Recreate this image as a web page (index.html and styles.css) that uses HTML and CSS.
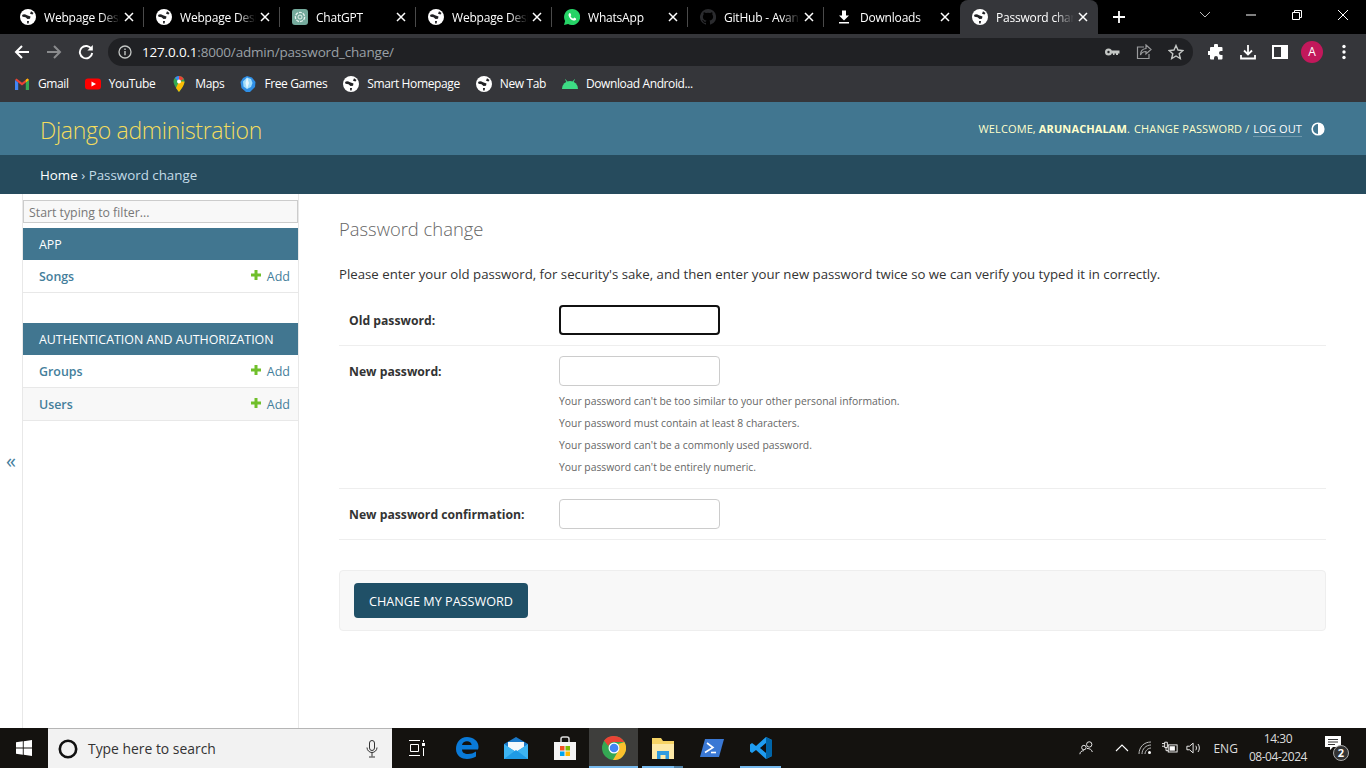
FILE: index.html
```html
<!DOCTYPE html>
<html lang="en">
<head>
    <meta charset="UTF-8">
    <meta name="viewport" content="width=device-width, initial-scale=1.0">
    <title>Password change | Django site admin</title>
    <link rel="stylesheet" href="styles.css">
</head>
<body>
    <svg class="sprites" width="0" height="0">
        <symbol id="globe" viewBox="0 0 16 16">
            <circle cx="8" cy="8" r="8" fill="#fff"/>
            <path d="M2 6C4 4.500 5.500 5.500 7 6.200L10.500 7.500 10 9.800 7.500 10 5.500 8.200 2.500 7.800ZM11 2.200 13.500 4 12.500 5.500 10 4.800ZM7 12 9 12 8.600 14.600 7.200 14.600Z" fill="#202124"/>
        </symbol>
        <symbol id="close" viewBox="0 0 10 10">
            <path d="M1 1 9 9M9 1 1 9" stroke="#fff" stroke-width="1.500" fill="none"/>
        </symbol>
        <symbol id="plus" viewBox="0 0 10 10">
            <path d="M5 0v10M0 5h10" stroke="#70bf2b" stroke-width="3"/>
        </symbol>
    </svg>

    <div class="chrome">
        <div class="tabstrip">
            <div class="tab sep"><svg class="favicon"><use href="#globe"/></svg><span class="tab-title">Webpage Design</span><svg class="tab-close"><use href="#close"/></svg></div>
            <div class="tab sep"><svg class="favicon"><use href="#globe"/></svg><span class="tab-title">Webpage Design</span><svg class="tab-close"><use href="#close"/></svg></div>
            <div class="tab sep">
                <svg class="favicon" viewBox="0 0 16 16"><rect width="16" height="16" rx="3" fill="#74aa9c"/><circle cx="8" cy="8" r="4.600" fill="none" stroke="#e6f2ef" stroke-width="1.300" stroke-dasharray="3 1"/><circle cx="8" cy="8" r="2" fill="none" stroke="#e6f2ef"/></svg>
                <span class="tab-title">ChatGPT</span><svg class="tab-close"><use href="#close"/></svg>
            </div>
            <div class="tab sep"><svg class="favicon"><use href="#globe"/></svg><span class="tab-title">Webpage Design</span><svg class="tab-close"><use href="#close"/></svg></div>
            <div class="tab sep">
                <svg class="favicon" viewBox="0 0 16 16"><path d="M8 0a8 8 0 0 0-6.900 12L0 16l4.100-1.100A8 8 0 1 0 8 0Z" fill="#25d366"/><path d="M5.600 4c-.9.500-1.300 1.600-.9 2.900.7 2.200 2.500 4 4.700 4.600 1.300.3 2.300-.2 2.700-1.100l-.1-.9-1.700-.9-.9.900C8.600 10 7 8.500 6.500 7.100l.8-.9-.7-1.800Z" fill="#fff"/></svg>
                <span class="tab-title">WhatsApp</span><svg class="tab-close"><use href="#close"/></svg>
            </div>
            <div class="tab sep">
                <svg class="favicon" viewBox="0 0 16 16"><path d="M8 0a8 8 0 0 0-2.500 15.600c.4.100.5-.2.500-.4v-1.400c-2.200.5-2.700-1-2.700-1-.4-.9-.9-1.200-.9-1.200-.7-.5.100-.5.100-.5.800.1 1.200.8 1.200.8.700 1.200 1.900.9 2.300.7.100-.5.300-.9.500-1.100-1.800-.2-3.600-.9-3.600-4 0-.9.300-1.600.8-2.100-.1-.2-.4-1 .1-2.100 0 0 .7-.2 2.200.8a7.600 7.600 0 0 1 4 0c1.500-1 2.200-.8 2.200-.8.400 1.100.2 1.900.1 2.100.5.600.8 1.300.8 2.100 0 3.100-1.900 3.800-3.700 4 .3.300.6.700.6 1.500v2.200c0 .2.100.5.600.4A8 8 0 0 0 8 0Z" fill="#2a2b2e"/></svg>
                <span class="tab-title">GitHub - Avantika</span><svg class="tab-close"><use href="#close"/></svg>
            </div>
            <div class="tab">
                <svg class="favicon" viewBox="0 0 16 16"><path d="M6 1.500h4v5h3L8 11.500 3 6.500h3ZM3 13h10v1.500H3Z" fill="#fff"/></svg>
                <span class="tab-title">Downloads</span><svg class="tab-close"><use href="#close"/></svg>
            </div>
            <div class="tab tab-active"><svg class="favicon"><use href="#globe"/></svg><span class="tab-title">Password change</span><svg class="tab-close"><use href="#close"/></svg></div>
            <svg class="new-tab" viewBox="0 0 14 14"><path d="M7 1v12M1 7h12" stroke="#fff" stroke-width="1.800"/></svg>
            <div class="window-controls">
                <svg class="win-btn" viewBox="0 0 46 16"><path d="M18 5l5 5 5-5" stroke="#bbb" fill="none"/></svg>
                <svg class="win-btn" viewBox="0 0 46 16"><path d="M18 8h10" stroke="#fff"/></svg>
                <svg class="win-btn" viewBox="0 0 46 16"><path d="M18.500 5.500h7v7h-7ZM20.500 5.500v-2h7v7h-2" stroke="#fff" fill="none"/></svg>
                <svg class="win-btn" viewBox="0 0 46 16"><path d="M18 3l10 10M28 3 18 13" stroke="#fff" fill="none"/></svg>
            </div>
        </div>

        <div class="toolbar">
            <svg class="nav-icon" viewBox="0 0 16 16"><path d="M15 8H2M8 2 2 8l6 6" stroke="#fff" stroke-width="2" fill="none"/></svg>
            <svg class="nav-icon" viewBox="0 0 16 16"><path d="M1 8h13M8 2l6 6-6 6" stroke="#8a8b8d" stroke-width="2" fill="none"/></svg>
            <svg class="nav-icon" viewBox="0 0 16 16"><path d="M13.500 5.200A6.200 6.200 0 1 0 14.200 9" stroke="#fff" stroke-width="1.900" fill="none"/><path d="M14.800 1v5.400H9.400Z" fill="#fff"/></svg>
            <div class="omnibox">
                <svg class="omni-info" viewBox="0 0 14 14"><circle cx="7" cy="7" r="6" stroke="#c4c7c5" stroke-width="1.300" fill="none"/><path d="M7 6v4.200M7 3.400v1.500" stroke="#c4c7c5" stroke-width="1.400"/></svg>
                <span class="url"><span class="url-host">127.0.0.1</span>:8000/admin/password_change/</span>
                <svg class="omni-action" viewBox="0 0 16 16"><circle cx="4.500" cy="8" r="3.500" fill="#c4c7c5"/><circle cx="4.500" cy="8" r="1.200" fill="#202124"/><path d="M7.500 6.500H15.500V9.500H14V11H12V9.500H10.500V11H9V9.500H7.500Z" fill="#c4c7c5"/></svg>
                <svg class="omni-action" viewBox="0 0 16 16"><path d="M8 3H1.500v11.500H13V10" stroke="#9a9b9d" stroke-width="1.200" fill="none"/><path d="M10 1l5 4.500-5 4.500V7.500C7.500 7.500 5.500 8.500 4.500 11c0-3.500 2-6.200 5.500-6.500Z" stroke="#9a9b9d" stroke-width="1.200" fill="none"/></svg>
                <svg class="omni-action" viewBox="0 0 16 16"><path d="M8 1.500l2 4.500 4.900.5-3.700 3.200 1.100 4.800L8 12l-4.300 2.500 1.100-4.800L1.100 6.500 6 6Z" stroke="#c4c7c5" stroke-width="1.400" fill="none"/></svg>
            </div>
            <svg class="tool-icon puzzle" viewBox="0 0 16 16"><path d="M6 1.500a2 2 0 0 1 4 0V3h3.500a1 1 0 0 1 1 1v3H13a2 2 0 0 0 0 4h1.500v3.500a1 1 0 0 1-1 1h-3.500V14a2 2 0 0 0-4 0v1.500H3a1 1 0 0 1-1-1V11H.500a2 2 0 0 1 0-4H2V4a1 1 0 0 1 1-1h3Z" fill="#fff"/></svg>
            <svg class="tool-icon" viewBox="0 0 16 16"><path d="M8 1v9M4 6.500l4 4 4-4M1 11v3.500h14V11" stroke="#fff" stroke-width="1.800" fill="none"/></svg>
            <svg class="tool-icon" viewBox="0 0 16 16"><path d="M1 2h14v12H1Z" stroke="#fff" stroke-width="2" fill="none"/><path d="M9 2h6v12H9Z" fill="#fff"/></svg>
            <div class="avatar">A</div>
            <svg class="tool-icon kebab" viewBox="0 0 16 16"><circle cx="8" cy="2.500" r="1.700" fill="#fff"/><circle cx="8" cy="8" r="1.700" fill="#fff"/><circle cx="8" cy="13.500" r="1.700" fill="#fff"/></svg>
        </div>

        <div class="bookmarks">
            <a class="bookmark"><svg class="bm-icon" viewBox="0 0 16 16"><path d="M1 4 8 9.500 15 4 13.500 2.500 8 6.800 2.500 2.500Z" fill="#ea4335"/><path d="M1 4V14H4.200V6.500Z" fill="#4285f4"/><path d="M15 4V14H11.800V6.500Z" fill="#34a853"/><path d="M15 4 13.500 2.500 11.800 3.800 11.800 6.500Z" fill="#fbbc04"/></svg>Gmail</a>
            <a class="bookmark"><svg class="bm-icon" viewBox="0 0 16 16"><rect y="2.500" width="16" height="11" rx="3" fill="#f00"/><path d="M6.500 5.500 11 8l-4.500 2.500Z" fill="#fff"/></svg>YouTube</a>
            <a class="bookmark"><svg class="bm-icon" viewBox="0 0 16 16"><path d="M8 0a5.500 5.500 0 0 0-5.500 5.500C2.500 9.500 8 16 8 16s5.500-6.500 5.500-10.500A5.500 5.500 0 0 0 8 0Z" fill="#34a853"/><path d="M8 0a5.500 5.500 0 0 0-4.200 2L8 5.500Z" fill="#4285f4"/><path d="M8 0v5.500l4.800-2.600A5.500 5.500 0 0 0 8 0Z" fill="#ea4335"/><path d="M13.500 5.500 8 5.500 5 12l3 4c1-1.500 5.500-6.500 5.500-10.500Z" fill="#fbbc04"/><circle cx="8" cy="5.500" r="2" fill="#fff"/></svg>Maps</a>
            <a class="bookmark"><svg class="bm-icon" viewBox="0 0 16 16"><path d="M7 0 12 1.500 15.500 6 15 11 10 16H6L1.500 12 .5 6 3 2Z" fill="#2f8fe6"/><path d="M7 1.500 11 3 12.500 7 11 11 7 13 3.500 10.500 3 5.500Z" fill="#9fdcfb"/><path d="M7 1.500 9 7 7 13 5.500 7Z" fill="#e4f6ff"/></svg>Free Games</a>
            <a class="bookmark"><svg class="bm-icon"><use href="#globe"/></svg>Smart Homepage</a>
            <a class="bookmark"><svg class="bm-icon"><use href="#globe"/></svg>New Tab</a>
            <a class="bookmark"><svg class="bm-icon" viewBox="0 0 16 16"><path d="M0 13a8 8 0 0 1 16 0Z" fill="#3ddc84"/><path d="M3.500 3.500 5 6M12.500 3.500 11 6" stroke="#3ddc84"/></svg>Download Android...</a>
        </div>
    </div>

    <div class="header">
        <div class="branding">Django administration</div>
        <div class="user-tools">
            <span>Welcome, <strong>Arunachalam</strong>.</span>
            <span>Change password /</span>
            <a class="logout">Log out</a>
            <svg class="theme-toggle" viewBox="0 0 14 14"><circle cx="7" cy="7" r="5.800" stroke="#fff" stroke-width="1.600" fill="none"/><path d="M7 1.200a5.800 5.800 0 0 1 0 11.600Z" fill="#fff"/></svg>
        </div>
    </div>
    <div class="breadcrumbs"><a class="crumb-home">Home</a> › Password change</div>

    <div class="main">
        <button class="sidebar-toggle">«</button>
        <nav class="sidebar">
            <input class="nav-filter" type="text" placeholder="Start typing to filter...">
            <div class="app-module">
                <div class="caption">App</div>
                <div class="model-row"><a class="model-name">Songs</a><a class="addlink"><svg class="plus"><use href="#plus"/></svg>Add</a></div>
            </div>
            <div class="app-module">
                <div class="caption">Authentication and Authorization</div>
                <div class="model-row"><a class="model-name">Groups</a><a class="addlink"><svg class="plus"><use href="#plus"/></svg>Add</a></div>
                <div class="model-row alt"><a class="model-name">Users</a><a class="addlink"><svg class="plus"><use href="#plus"/></svg>Add</a></div>
            </div>
        </nav>

        <div class="content">
            <h1>Password change</h1>
            <p class="intro">Please enter your old password, for security's sake, and then enter your new password twice so we can verify you typed it in correctly.</p>
            <form>
                <div class="form-row">
                    <label>Old password:</label>
                    <div class="field"><input class="pw pw-focus" type="password"></div>
                </div>
                <div class="form-row">
                    <label>New password:</label>
                    <div class="field">
                        <input class="pw" type="password">
                        <ul class="help">
                            <li>Your password can't be too similar to your other personal information.</li>
                            <li>Your password must contain at least 8 characters.</li>
                            <li>Your password can't be a commonly used password.</li>
                            <li>Your password can't be entirely numeric.</li>
                        </ul>
                    </div>
                </div>
                <div class="form-row">
                    <label>New password confirmation:</label>
                    <div class="field"><input class="pw" type="password"></div>
                </div>
                <div class="submit-row"><button class="default" type="button">Change my password</button></div>
            </form>
        </div>
    </div>

    <div class="taskbar">
        <div class="start"><svg class="win-logo" viewBox="0 0 16 16"><path d="M0 2.300 6.800 1.300V7.600H0ZM7.700 1.200 16 0V7.600H7.700ZM0 8.400H6.800V14.700L0 13.700ZM7.700 8.400H16V16L7.700 14.800Z" fill="#fff"/></svg></div>
        <div class="search">
            <svg class="cortana" viewBox="0 0 20 20"><circle cx="10" cy="10" r="8.200" stroke="#111" stroke-width="2.600" fill="none"/></svg>
            <span class="search-text">Type here to search</span>
            <svg class="mic" viewBox="0 0 12 18"><rect x="3.500" y=".5" width="5" height="10" rx="2.500" stroke="#333" fill="none"/><path d="M1 7.500a5 5 0 0 0 10 0M6 12.500v4M3 17h6" stroke="#333" fill="none"/></svg>
        </div>
        <div class="task-icon task-view"><svg class="tb-svg" viewBox="0 0 16 16"><path d="M0 .5h11M0 15.500h11M1.500 4.500h8v7h-8Z" stroke="#fff" fill="none"/><path d="M13 3h3v3h-3ZM14 8h1v8h-1ZM14 0h1v2h-1Z" fill="#fff"/></svg></div>
        <div class="task-icon"><svg class="tb-app" viewBox="0 0 24 24"><path d="M12 1C5 1 1 7 1 13c0 7 6 10 11 10 3.500 0 6.500-1 9-2.500v-5c-2.500 1.700-5 2.500-8 2.500-3.500 0-6-1.500-6-4.500h16c.5-1 .5-2 .5-3C23.500 5 18 1 12 1Zm-5 8c.3-2.200 2.500-3.800 5-3.800s4.500 1.500 4.700 3.800Z" fill="#0a7ad8"/></svg></div>
        <div class="task-icon"><svg class="tb-app" viewBox="0 0 24 24"><path d="M0 8 12 1l12 7v15H0Z" fill="#1a78c8"/><path d="M4 6h16v5l-8 5-8-5Z" fill="#f4f8fb"/><path d="M0 8l12 8 12-8v15H0Z" fill="#3db4f2"/><path d="M0 23 12 14l12 9Z" fill="#1f9be6"/></svg></div>
        <div class="task-icon"><svg class="tb-app" viewBox="0 0 24 24"><path d="M8 7V3a2 2 0 0 1 2-2h4a2 2 0 0 1 2 2v4" stroke="#ddd" stroke-width="1.500" fill="none"/><rect x="1" y="6" width="22" height="18" fill="#f4f4f4"/><rect x="7" y="10" width="4.500" height="4.500" fill="#f25022"/><rect x="12.500" y="10" width="4.500" height="4.500" fill="#7fba00"/><rect x="7" y="15.500" width="4.500" height="4.500" fill="#00a4ef"/><rect x="12.500" y="15.500" width="4.500" height="4.500" fill="#ffb900"/></svg></div>
        <div class="task-icon task-active running"><svg class="tb-app" viewBox="0 0 24 24"><circle cx="12" cy="12" r="12" fill="#34a853"/><path d="M12 0a12 12 0 0 1 10.400 6H12a6 6 0 0 0-5.700 4L2 4.500A12 12 0 0 1 12 0Z" fill="#ea4335"/><path d="M22.400 6A12 12 0 0 1 11 24l5.200-9A6 6 0 0 0 16 8Z" fill="#fbc02d"/><circle cx="12" cy="12" r="5.500" fill="#fff"/><circle cx="12" cy="12" r="4.300" fill="#4285f4"/></svg></div>
        <div class="task-icon running stacked"><svg class="tb-app" viewBox="0 0 24 24"><path d="M1 2h9l2 3h11v18H1Z" fill="#f6d365"/><path d="M1 8h22v15H1Z" fill="#fde9a8"/><path d="M6 23v-8h12v8h-3.500v-4h-5v4Z" fill="#2f9be0"/></svg></div>
        <div class="task-icon"><svg class="tb-app" viewBox="0 0 24 24"><path d="M5 3h19l-5 18H0Z" fill="#3a78d4"/><path d="M7 7l6 4.500-8 5" stroke="#fff" stroke-width="1.600" fill="none"/><path d="M11 16.500h5" stroke="#fff" stroke-width="1.600"/></svg></div>
        <div class="task-icon running"><svg class="tb-app" viewBox="0 0 24 24"><path d="M17 1l6 3v16l-6 3L7 14l-4 3-2-1.500V8.500L3 7l4 3Z" fill="#1f9cf0"/><path d="M17 7 11 12l6 5Z" fill="#101010"/><path d="M17 1l6 3v16l-6 3Z" fill="#0065a9"/></svg></div>
        <div class="tray">
            <svg class="tray-people" viewBox="0 0 18 18"><circle cx="11.500" cy="5" r="3" stroke="#fff" fill="none"/><circle cx="5.500" cy="8.500" r="2.500" stroke="#fff" fill="none"/><path d="M1 16c0-2.500 2-4 4.500-4M9 9.500c3 0 5.500 1.500 6 4" stroke="#fff" fill="none"/></svg>
            <svg class="tray-chevron" viewBox="0 0 14 8"><path d="M1 7l6-6 6 6" stroke="#fff" stroke-width="1.100" fill="none"/></svg>
            <svg class="tray-icon" viewBox="0 0 16 16"><path d="M1 14C1 7 6 2 13 2M4 14c0-5 4-9 9-9M7 14c0-3 3-6 6-6" stroke="#bbb" fill="none"/><circle cx="11.500" cy="12.500" r="1.500" fill="#fff"/></svg>
            <svg class="tray-icon" viewBox="0 0 18 16"><path d="M0 3h3M0 6h3M3 1.500h3v6H3ZM4.500 7.500V11H7" stroke="#fff" fill="none"/><rect x="7" y="4.500" width="10" height="8" stroke="#fff" fill="none"/><rect x="8.500" y="6" width="6" height="5" fill="#fff"/></svg>
            <svg class="tray-icon" viewBox="0 0 18 16"><path d="M1 6h3l4-3.500v11L4 10H1Z M11 5.500c1 1.500 1 3.500 0 5M13.500 3.500c2 2.500 2 6.500 0 9" stroke="#fff" fill="none"/></svg>
            <span class="lang">ENG</span>
            <div class="clock"><span>14:30</span><span>08-04-2024</span></div>
            <div class="notif">
                <svg class="notif-icon" viewBox="0 0 16 16"><path d="M0 0h16v11H8l-3 3v-3H0Z" fill="#fff"/><path d="M3 3.500h10M3 6h10M3 8.500h7" stroke="#333"/></svg>
                <span class="notif-badge">2</span>
            </div>
        </div>
    </div>
</body>
</html>
```

FILE: styles.css
```css
:root {
    --primary: #417690;
    --secondary: #264b5d;
    --link: #447e9b;
    --hairline: #e8e8e8;
    --chrome-bar: #35363a;
    --ui-font: "Open Sans", "Noto Sans", Arial, sans-serif;
}

* {
    box-sizing: border-box;
}

html, body {
    height: 100%;
}

body {
    margin: 0;
    display: flex;
    flex-direction: column;
    height: 100vh;
    overflow: hidden;
    background: #fff;
    color: #333;
    font-family: var(--ui-font);
    font-size: 14px;
}

.sprites {
    position: absolute;
}

/* browser chrome */
.tabstrip {
    display: flex;
    align-items: center;
    height: 34px;
    padding-left: 8px;
    background: #000;
    color: #fff;
    font-size: 12px;
    letter-spacing: -0.2px;
}

.tab {
    display: flex;
    align-items: center;
    flex: none;
    width: 136px;
    height: 34px;
    padding: 0 10px 0 12px;
    position: relative;
}

.tab.sep::after {
    content: "";
    position: absolute;
    right: 0;
    top: 7px;
    width: 1px;
    height: 20px;
    background: #4a4a4a;
}

.tab-active {
    width: 138px;
    background: var(--chrome-bar);
    border-radius: 8px 8px 0 0;
}

.favicon {
    flex: none;
    width: 16px;
    height: 16px;
}

.tab-title {
    flex: 1;
    min-width: 0;
    margin-left: 8px;
    overflow: hidden;
    white-space: nowrap;
    -webkit-mask-image: linear-gradient(to right, #000 75%, transparent);
    mask-image: linear-gradient(to right, #000 75%, transparent);
}

.tab-close {
    flex: none;
    width: 10px;
    height: 10px;
    margin-left: 4px;
}

.new-tab {
    flex: none;
    width: 14px;
    height: 14px;
    margin-left: 14px;
}

.window-controls {
    display: flex;
    margin-left: auto;
    margin-bottom: 4px;
}

.win-btn {
    width: 46px;
    height: 16px;
}

.toolbar {
    display: flex;
    align-items: center;
    height: 35px;
    padding-left: 14px;
    background: var(--chrome-bar);
}

.nav-icon {
    flex: none;
    width: 16px;
    height: 16px;
    margin-right: 16px;
}

.omnibox {
    display: flex;
    align-items: center;
    flex: none;
    width: 1085px;
    height: 28px;
    margin-left: -2px;
    padding: 0 9px 0 10px;
    border-radius: 14px;
    background: #202124;
    color: #9aa0a6;
    font-size: 13.5px;
}

.omni-info {
    flex: none;
    width: 14px;
    height: 14px;
}

.url {
    flex: 1;
    margin-left: 10px;
    letter-spacing: -0.18px;
}

.url-host {
    color: #fff;
}

.omni-action {
    flex: none;
    width: 16px;
    height: 16px;
    margin-left: 16px;
}

.tool-icon {
    flex: none;
    width: 16px;
    height: 16px;
    margin-left: 16px;
}

.tool-icon.puzzle {
    margin-left: 15px;
}

.tool-icon.kebab {
    margin-left: 13px;
}

.avatar {
    flex: none;
    width: 22px;
    height: 22px;
    margin-left: 13px;
    border-radius: 50%;
    background: #c2185b;
    color: #fff;
    font-size: 12px;
    line-height: 22px;
    text-align: center;
}

.bookmarks {
    display: flex;
    align-items: center;
    height: 33px;
    padding: 0 0 4px 14px;
    background: var(--chrome-bar);
    color: #fff;
    font-size: 12px;
    letter-spacing: -0.38px;
}

.bookmark {
    display: flex;
    align-items: center;
    margin-right: 16px;
    white-space: nowrap;
}

.bm-icon {
    flex: none;
    width: 16px;
    height: 16px;
    margin-right: 8px;
}

/* admin header */
.header {
    display: flex;
    align-items: center;
    justify-content: space-between;
    height: 53px;
    padding: 0 40px;
    background: var(--primary);
    color: #ffc;
}

.branding {
    padding-top: 2px;
    color: #f5dd5d;
    font-size: 23px;
    font-weight: 300;
    letter-spacing: -0.3px;
}

.user-tools {
    display: flex;
    align-items: center;
    gap: 4px;
    margin-right: 1px;
    font-size: 11px;
    letter-spacing: 0.12px;
    text-transform: uppercase;
}

.logout {
    border-bottom: 1px solid rgba(255, 255, 255, 0.25);
    color: #fff;
}

.theme-toggle {
    width: 14px;
    height: 14px;
    margin-left: 5px;
}

.breadcrumbs {
    height: 39px;
    padding: 0 40px;
    background: var(--secondary);
    color: #c4dce8;
    font-size: 13.35px;
    line-height: 40px;
}

.crumb-home {
    color: #fff;
}

/* sidebar */
.main {
    display: flex;
    flex: 1;
    min-height: 0;
}

.sidebar-toggle {
    flex: none;
    width: 22px;
    padding: 0 0 2px;
    border: 0;
    background: #fff;
    color: #447e9b;
    font-family: var(--ui-font);
    font-size: 20px;
}

.sidebar {
    flex: none;
    width: 277px;
    padding-top: 6px;
    border-left: 1px solid var(--hairline);
    border-right: 1px solid var(--hairline);
}

.nav-filter {
    display: block;
    width: 100%;
    height: 23px;
    margin-bottom: 5px;
    padding: 2px 5px 0;
    border: 1px solid #ccc;
    background: #f8f8f8;
    font-family: var(--ui-font);
    font-size: 12.3px;
}

.nav-filter::placeholder {
    color: #777;
}

.app-module {
    margin-bottom: 30px;
}

.caption {
    height: 32px;
    padding-left: 16px;
    background: var(--primary);
    color: #fff;
    font-size: 12.4px;
    line-height: 33px;
    text-transform: uppercase;
}

.model-row {
    display: flex;
    align-items: center;
    justify-content: space-between;
    height: 33px;
    padding: 0 8px 0 16px;
    border-bottom: 1px solid var(--hairline);
    color: var(--link);
    font-size: 12.5px;
}

.model-row.alt {
    background: #f8f8f8;
}

.model-name {
    font-size: 12.4px;
    font-weight: 600;
}

.addlink {
    display: flex;
    align-items: center;
}

.plus {
    width: 10px;
    height: 10px;
    margin-right: 6px;
    margin-bottom: 3px;
}

/* form */
.content {
    flex: 1;
    min-width: 0;
    padding: 20px 40px 0;
}

h1 {
    margin: 0;
    color: #666;
    font-size: 18.4px;
    font-weight: 300;
    line-height: 30px;
}

.intro {
    margin: 20px 0 11px;
    font-size: 13.22px;
    line-height: 20px;
}

.form-row {
    display: flex;
    padding: 10px;
    border-bottom: 1px solid #eee;
}

.form-row label {
    flex: none;
    width: 210px;
    height: 30px;
    padding-top: 1px;
    color: #333;
    font-size: 12.2px;
    font-weight: 700;
    line-height: 30px;
}

.pw {
    display: block;
    width: 161px;
    height: 30px;
    border: 1px solid #ccc;
    border-radius: 4px;
    background: #fff;
}

.pw-focus {
    border: 2px solid #111;
    outline: 0;
}

.help {
    margin: 4px 0 0;
    padding: 0;
    list-style: none;
    color: #666;
    font-size: 10.37px;
    line-height: 22px;
}

.submit-row {
    height: 61px;
    margin-top: 30px;
    padding: 12px 14px;
    border: 1px solid #eee;
    border-radius: 4px;
    background: #f8f8f8;
}

.default {
    width: 174px;
    height: 35px;
    padding: 0;
    border: 0;
    border-radius: 4px;
    background: #205067;
    color: #fff;
    font-family: var(--ui-font);
    font-size: 12.65px;
    text-transform: uppercase;
}

/* taskbar */
.taskbar {
    display: flex;
    align-items: stretch;
    flex: none;
    height: 40px;
    background: #14120f;
    color: #fff;
}

.start {
    display: flex;
    align-items: center;
    justify-content: center;
    flex: none;
    width: 48px;
}

.win-logo {
    width: 16px;
    height: 16px;
}

.search {
    display: flex;
    align-items: center;
    flex: none;
    width: 344px;
    padding: 0 14px 0 10px;
    border-top: 1px solid #b5b5b5;
    background: #f2f2f2;
    color: #333;
    font-size: 13.9px;
}

.cortana {
    flex: none;
    width: 20px;
    height: 20px;
}

.search-text {
    flex: 1;
    margin-left: 10px;
}

.mic {
    flex: none;
    width: 12px;
    height: 18px;
}

.task-icon {
    display: flex;
    align-items: center;
    justify-content: center;
    flex: none;
    width: 49px;
    position: relative;
}

.task-view {
    width: 50px;
}

.task-active {
    background: #3e3e3c;
}

.running::after {
    content: "";
    position: absolute;
    left: 4px;
    right: 4px;
    bottom: 0;
    height: 2px;
    background: #76b9ed;
}

.task-active.running::after {
    left: 0;
    right: 0;
}

.stacked::after {
    background: linear-gradient(to right, #76b9ed 78%, #4f7fa3 78%);
}

.tb-svg {
    width: 16px;
    height: 16px;
}

.tb-app {
    width: 24px;
    height: 24px;
}

.tray {
    display: flex;
    align-items: center;
    margin-left: auto;
    font-size: 12px;
}

.tray-people {
    width: 16px;
    height: 16px;
    margin-right: 20px;
}

.tray-chevron {
    width: 14px;
    height: 8px;
    margin-right: 9px;
}

.tray-icon {
    width: 16px;
    height: 16px;
    margin-right: 8px;
}

.lang {
    margin: 0 11px 0 3px;
    color: #ddd;
}

.clock {
    display: flex;
    flex-direction: column;
    align-items: center;
    margin-right: 18px;
    color: #ddd;
    letter-spacing: -0.45px;
    line-height: 18px;
}

.notif {
    width: 28px;
    height: 24px;
    margin-right: 13px;
    position: relative;
}

.notif-icon {
    width: 16px;
    height: 16px;
}

.notif-badge {
    position: absolute;
    right: 4px;
    bottom: -1px;
    width: 16px;
    height: 16px;
    border: 1px solid #aaa;
    border-radius: 50%;
    background: #333;
    font-size: 11px;
    font-weight: 700;
    line-height: 14px;
    text-align: center;
}
```
